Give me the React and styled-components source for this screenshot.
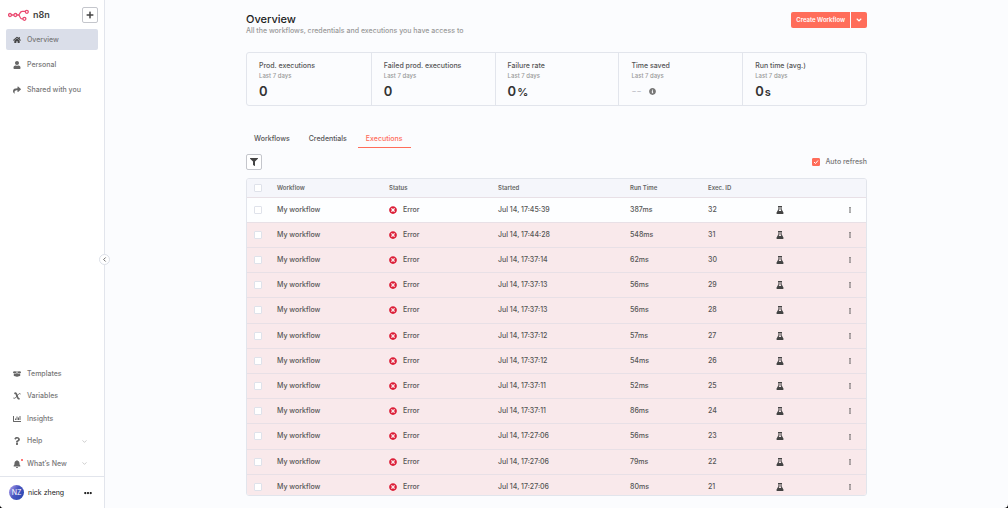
import styled, { createGlobalStyle } from 'styled-components'
import {
    FaHome, FaUser, FaShare, FaBoxOpen, FaChartBar, FaQuestion, FaBell, FaPlus,
    FaFilter, FaTimesCircle, FaEllipsisV, FaEllipsisH, FaInfoCircle, FaAngleDown
} from 'react-icons/fa'
import { ChevronDown, ChevronLeft } from 'lucide-react'

const GlobalStyle = createGlobalStyle`
    * {
        box-sizing: border-box;
    }
    body {
        margin: 0;
        background: #000;
        font-family: Inter, "Liberation Sans", sans-serif;
        font-size: 7px;
        font-weight: 500;
        line-height: 10px;
        color: #555;
    }
    button, input {
        font: inherit;
        color: inherit;
        margin: 0;
        padding: 0;
    }
    button {
        cursor: pointer;
    }
    a {
        color: inherit;
        text-decoration: none;
    }
    svg {
        display: block;
        flex-shrink: 0;
    }
`
const Layout = styled.div`
    display: flex;
    height: 100vh;
    overflow: hidden;
    background: #fbfcfe;
    border-radius: 0 0 4px 4px;
`
const Sidebar = styled.aside`
    position: relative;
    display: flex;
    flex-direction: column;
    width: 105px;
    flex-shrink: 0;
    background: #fff;
    border-right: 1px solid #e2e5ec;
`
const Brand = styled.div`
    display: flex;
    align-items: center;
    gap: 4px;
    height: 29px;
    padding: 0 6px 0 8px;
    font-size: 9px;
    font-weight: 600;
    color: #444;
`
const AddButton = styled.button`
    display: grid;
    place-items: center;
    width: 16px;
    height: 16px;
    margin-left: auto;
    background: #fff;
    border: 1px solid #c4c6cc;
    border-radius: 2px;
    color: #444;
`
const Menu = styled.nav`
    display: flex;
    flex-direction: column;
    gap: 4px;
    padding: 0 6px;
`
const BottomMenu = styled(Menu)`
    justify-content: space-between;
    gap: 0;
    height: 111px;
    margin: auto 0 2px;
`
const MenuLink = styled.a`
    display: flex;
    align-items: center;
    gap: 6px;
    height: 21px;
    padding: 0 10px 0 6px;
    border-radius: 2px;
    color: #777;
    background: ${p => p.$active ? '#dadee9' : 'transparent'};
    > svg:last-child {
        margin-left: auto;
        color: #aaa;
    }
`
const MenuIcon = styled.span`
    position: relative;
    display: grid;
    place-items: center;
    width: 9px;
    color: ${p => p.$active ? '#444' : '#666'};
`
const Dot = styled.span`
    position: absolute;
    top: -1px;
    right: -2px;
    width: 2px;
    height: 2px;
    border-radius: 50%;
    background: #ff4a4a;
`
const Collapse = styled.button`
    position: absolute;
    top: 254px;
    right: -6px;
    display: grid;
    place-items: center;
    width: 11px;
    height: 11px;
    background: #fff;
    border: 1px solid #dbdfe7;
    border-radius: 50%;
    color: #555;
`
const User = styled.div`
    display: flex;
    align-items: center;
    gap: 4px;
    height: 32px;
    padding: 0 12px 0 9px;
    border-top: 1px solid #e2e5ec;
    font-weight: 400;
    color: #222;
`
const Avatar = styled.span`
    display: grid;
    place-items: center;
    width: 15px;
    height: 15px;
    border-radius: 50%;
    background: linear-gradient(120deg, #b9a6f0, #4a56c0 45%, #2447b0);
    color: #fff;
`
const PlainButton = styled.button`
    display: inline-block;
    vertical-align: middle;
    border: 0;
    background: none;
    margin-left: ${p => p.$push ? 'auto' : 0};
`
const Main = styled.main`
    flex: 1;
    min-width: 0;
    display: flex;
    flex-direction: column;
    padding: 12px;
    > * {
        width: 100%;
        max-width: 621px;
        margin-left: auto;
        margin-right: auto;
    }
`
const Header = styled.header`
    display: flex;
    justify-content: space-between;
    align-items: flex-start;
`
const Title = styled.h1`
    margin: 0;
    font-size: 11px;
    line-height: 14px;
    font-weight: 500;
    color: #222;
`
const SubTitle = styled.p`
    margin: 0;
    color: #999;
`
const SplitButton = styled.div`
    display: flex;
    gap: 1px;
    height: 16px;
    border-radius: 2px;
    overflow: hidden;
    button {
        display: grid;
        place-items: center;
        padding: 0 4px;
        border: 0;
        background: #ff6d5a;
        color: #fff;
        font-size: 6px;
        font-weight: 600;
    }
    button:first-child {
        padding: 0 5px;
    }
`
const Stats = styled.dl`
    display: grid;
    grid-template-columns: repeat(5, 1fr);
    margin-top: 16px;
    margin-bottom: 24px;
    border: 1px solid #e2e5ec;
    border-radius: 3px;
`
const Stat = styled.div`
    height: 52px;
    padding: 8px 12px;
    & + & {
        border-left: 1px solid #e2e5ec;
    }
    dt small {
        display: block;
        font-size: 6px;
        color: #999;
    }
    dd {
        display: flex;
        align-items: baseline;
        gap: 1px;
        margin: 0;
        font-size: 13px;
        line-height: 20px;
        font-weight: 600;
        color: #333;
    }
    dd small {
        font-size: 11px;
    }
`
const Empty = styled.span`
    display: flex;
    align-items: center;
    gap: 7px;
    color: #c4c6cc;
    font-size: 11px;
    font-weight: 400;
    svg {
        color: #777;
    }
`
const Tabs = styled.nav`
    display: flex;
    gap: 3px;
`
const Tab = styled.a`
    height: 18px;
    padding: 4px 8px;
    border-bottom: 1px solid ${p => p.$active ? '#ff6d5a' : 'transparent'};
    color: ${p => p.$active ? '#ff6d5a' : '#555'};
`
const Toolbar = styled.div`
    display: flex;
    justify-content: space-between;
    align-items: center;
    margin-top: 6px;
    margin-bottom: 8px;
`
const FilterButton = styled(AddButton)`
    margin: 0;
`
const Refresh = styled.label`
    display: flex;
    align-items: center;
    gap: 5px;
    color: #777;
`
const Checkbox = styled.input.attrs({ type: 'checkbox' })`
    appearance: none;
    display: block;
    width: 8px;
    height: 8px;
    background: #fff;
    border: 1px solid #dfe2ea;
    border-radius: 1px;
    &:checked {
        border-color: #ff6d5a;
        background: #ff6d5a url("data:image/svg+xml,%3Csvg xmlns='http://www.w3.org/2000/svg' viewBox='0 0 6 6'%3E%3Cpath d='M1 3l1.5 1.5L5 1.5' fill='none' stroke='white'/%3E%3C/svg%3E") center / 6px no-repeat;
    }
`
const TableCard = styled.div`
    flex: 1;
    min-height: 0;
    overflow: hidden;
    border: 1px solid #e2e5ec;
    border-radius: 3px;
`
const Table = styled.table`
    width: 100%;
    height: 321px;
    table-layout: fixed;
    border-collapse: collapse;
    th, td {
        padding: 0 6px;
        text-align: left;
        border-bottom: 1px solid #e8e0e6;
    }
    th {
        height: 18px;
        font-size: 6px;
        font-weight: 600;
        color: #666;
        background: #f5f6fb;
    }
    th:first-child, td:first-child {
        padding: 0 0 0 7px;
    }
    th:nth-child(7), td:nth-child(7) {
        padding: 0;
    }
    td:nth-child(7) svg {
        margin: 0 auto;
    }
    td:last-child {
        padding-right: 13px;
        text-align: right;
    }
`
const Row = styled.tr`
    background: ${p => p.$first ? '#fdfeff' : '#f9e9eb'};
    color: #555;
`
const Status = styled.span`
    display: flex;
    align-items: center;
    gap: 6px;
    svg {
        color: #dc1f38;
    }
`

const N8nLogo = () => (
    <svg width="21" height="12" viewBox="0 0 21 12" fill="none" stroke="#ea4b71" strokeWidth="1.3">
        <circle cx="2" cy="6" r="1.5" />
        <circle cx="7.4" cy="6" r="1.5" />
        <circle cx="18.8" cy="2.8" r="1.5" />
        <circle cx="16.4" cy="9.8" r="1.5" />
        <path d="M3.5 6h2.4M8.900 6h1.300c2.200 0 1.200-3.600 4-3.600h3.100M10.200 6c2.200 0 1.200 3.800 3.600 3.800h1.100" />
    </svg>
)

const VariableIcon = () => (
    <svg width="8" height="8" viewBox="0 0 16 16" fill="none" stroke="currentColor" strokeLinecap="round">
        <path d="M4 2.5c4-1.5 3.5 11 8 11" strokeWidth="3.4" />
        <path d="M14.5 3.5C10-.5 7 15.5 1.5 12.5" strokeWidth="2" />
    </svg>
)

const FlaskIcon = () => (
    <svg width="8" height="8" viewBox="0 0 16 16" fill="#444">
        <path fillRule="evenodd" d="M4 0h8v2h-.8v4.500l3.600 6.500c.8 1.600 0 3-1.600 3H2.800c-1.600 0-2.400-1.400-1.600-3l3.600-6.500V2H4zM7 2v5L5.400 10h5.200L9 7V2z" />
    </svg>
)

const menu = [
    { name: 'Overview', icon: <FaHome size={8} />, active: true },
    { name: 'Personal', icon: <FaUser size={8} /> },
    { name: 'Shared with you', icon: <FaShare size={8} /> }
]
const bottomMenu = [
    { name: 'Templates', icon: <FaBoxOpen size={8} /> },
    { name: 'Variables', icon: <VariableIcon /> },
    { name: 'Insights', icon: <FaChartBar size={8} /> },
    { name: 'Help', icon: <FaQuestion size={8} />, more: true },
    { name: 'What’s New', icon: <FaBell size={8} />, more: true, dot: true }
]
const stats = [
    { name: 'Prod. executions', value: '0' },
    { name: 'Failed prod. executions', value: '0' },
    { name: 'Failure rate', value: '0', unit: '%' },
    { name: 'Time saved' },
    { name: 'Run time (avg.)', value: '0', unit: 's' }
]
const executions = [
    [32, '17:45:39', 387],
    [31, '17:44:28', 548],
    [30, '17:37:14', 62],
    [29, '17:37:13', 56],
    [28, '17:37:13', 56],
    [27, '17:37:12', 57],
    [26, '17:37:12', 54],
    [25, '17:37:11', 52],
    [24, '17:37:11', 86],
    [23, '17:27:06', 56],
    [22, '17:27:06', 79],
    [21, '17:27:06', 80]
]
const columns = [24, 112, 109, 132, 78, 66, 24, 74]

const MenuItem = ({ item }) => (
    <MenuLink href="#" $active={item.active}>
        <MenuIcon $active={item.active}>
            {item.icon}
            {item.dot && <Dot />}
        </MenuIcon>
        {item.name}
        {item.more && <ChevronDown size={7} />}
    </MenuLink>
)

const App = () => {
    return <>
        <GlobalStyle />
        <Layout>
            <Sidebar>
                <Brand>
                    <N8nLogo />
                    n8n
                    <AddButton aria-label="Add"><FaPlus size={8} /></AddButton>
                </Brand>
                <Menu>
                    {menu.map(item => <MenuItem key={item.name} item={item} />)}
                </Menu>
                <BottomMenu>
                    {bottomMenu.map(item => <MenuItem key={item.name} item={item} />)}
                </BottomMenu>
                <User>
                    <Avatar>NZ</Avatar>
                    nick zheng
                    <PlainButton $push aria-label="User menu"><FaEllipsisH size={8} /></PlainButton>
                </User>
                <Collapse aria-label="Collapse sidebar"><ChevronLeft size={7} strokeWidth={3} /></Collapse>
            </Sidebar>
            <Main>
                <Header>
                    <div>
                        <Title>Overview</Title>
                        <SubTitle>All the workflows, credentials and executions you have access to</SubTitle>
                    </div>
                    <SplitButton>
                        <button>Create Workflow</button>
                        <button aria-label="More create options"><FaAngleDown size={8} /></button>
                    </SplitButton>
                </Header>
                <Stats>
                    {stats.map(stat => (
                        <Stat key={stat.name}>
                            <dt>{stat.name}<small>Last 7 days</small></dt>
                            <dd>
                                {stat.value || <Empty>-- <FaInfoCircle size={7} /></Empty>}
                                {stat.unit && <small>{stat.unit}</small>}
                            </dd>
                        </Stat>
                    ))}
                </Stats>
                <Tabs>
                    <Tab href="#">Workflows</Tab>
                    <Tab href="#">Credentials</Tab>
                    <Tab href="#" $active>Executions</Tab>
                </Tabs>
                <Toolbar>
                    <FilterButton aria-label="Filter"><FaFilter size={8} /></FilterButton>
                    <Refresh>
                        <Checkbox defaultChecked />
                        Auto refresh
                    </Refresh>
                </Toolbar>
                <TableCard>
                    <Table>
                        <colgroup>
                            {columns.map((width, i) => <col key={i} width={width} />)}
                        </colgroup>
                        <thead>
                            <tr>
                                <th><Checkbox aria-label="Select all" /></th>
                                <th>Workflow</th>
                                <th>Status</th>
                                <th>Started</th>
                                <th>Run Time</th>
                                <th>Exec. ID</th>
                                <th></th>
                                <th></th>
                            </tr>
                        </thead>
                        <tbody>
                            {executions.map(([id, time, ms], i) => (
                                <Row key={id} $first={i === 0}>
                                    <td><Checkbox aria-label={`Select ${id}`} /></td>
                                    <td>My workflow</td>
                                    <td><Status><FaTimesCircle size={8} />Error</Status></td>
                                    <td>Jul 14, {time}</td>
                                    <td>{ms}ms</td>
                                    <td>{id}</td>
                                    <td><FlaskIcon /></td>
                                    <td><PlainButton aria-label="Actions"><FaEllipsisV size={6} /></PlainButton></td>
                                </Row>
                            ))}
                        </tbody>
                    </Table>
                </TableCard>
            </Main>
        </Layout>
    </>
}

export default App
